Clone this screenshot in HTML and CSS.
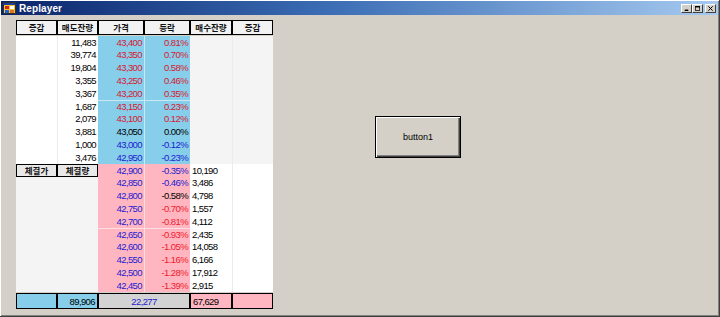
FILE: index.html
```html
<!DOCTYPE html>
<html lang="ko">
<head>
<meta charset="utf-8">
<title>Replayer</title>
<link rel="stylesheet" href="styles.css">
</head>
<body>
<div class="window">
  <div class="titlebar">
    <svg class="appicon" width="13" height="12" viewBox="0 0 13 12">
      <rect x="0.5" y="0.5" width="12" height="11" fill="#f4c430" stroke="#303030"/>
      <rect x="1" y="1" width="11" height="2" fill="#1c3f9c"/>
      <rect x="2" y="4" width="4" height="3" fill="#e02020"/>
      <rect x="7" y="4" width="4" height="3" fill="#ffffff"/>
      <rect x="2" y="8" width="4" height="3" fill="#2060e0"/>
      <rect x="7" y="8" width="4" height="3" fill="#e07020"/>
    </svg>
    <span class="title">Replayer</span>
    <div class="caption-btns">
      <span class="cbtn"><svg width="9" height="7" viewBox="0 0 9 7"><rect x="2" y="5" width="5" height="2" fill="#000"/></svg></span>
      <span class="cbtn"><svg width="9" height="7" viewBox="0 0 9 7"><rect x="1.5" y="0.5" width="6" height="6" fill="none" stroke="#000"/><rect x="1" y="0" width="7" height="2" fill="#000"/></svg></span>
      <span class="cbtn close"><svg width="9" height="7" viewBox="0 0 9 7"><path d="M1.5 0.5 L7.5 6.5 M7.5 0.5 L1.5 6.5" stroke="#000" stroke-width="1.4"/></svg></span>
    </div>
  </div>
  <div class="client">
    <div class="book">
      <div class="row hdr">
        <div class="hcell">증감</div>
        <div class="hcell">매도잔량</div>
        <div class="hcell">가격</div>
        <div class="hcell">등락</div>
        <div class="hcell">매수잔량</div>
        <div class="hcell">증감</div>
      </div>

      <div class="group ask">
        <div class="row"><div class="c c1"></div><div class="c c2 r">11,483</div><div class="c c3 r up">43,400</div><div class="c c4 r up">0.81%</div><div class="c c5"></div><div class="c c6"></div></div>
        <div class="row"><div class="c c1"></div><div class="c c2 r">39,774</div><div class="c c3 r up">43,350</div><div class="c c4 r up">0.70%</div><div class="c c5"></div><div class="c c6"></div></div>
        <div class="row"><div class="c c1"></div><div class="c c2 r">19,804</div><div class="c c3 r up">43,300</div><div class="c c4 r up">0.58%</div><div class="c c5"></div><div class="c c6"></div></div>
        <div class="row"><div class="c c1"></div><div class="c c2 r">3,355</div><div class="c c3 r up">43,250</div><div class="c c4 r up">0.46%</div><div class="c c5"></div><div class="c c6"></div></div>
        <div class="row"><div class="c c1"></div><div class="c c2 r">3,367</div><div class="c c3 r up">43,200</div><div class="c c4 r up">0.35%</div><div class="c c5"></div><div class="c c6"></div></div>
      </div>
      <div class="group ask sep">
        <div class="row"><div class="c c1"></div><div class="c c2 r">1,687</div><div class="c c3 r up">43,150</div><div class="c c4 r up">0.23%</div><div class="c c5"></div><div class="c c6"></div></div>
        <div class="row"><div class="c c1"></div><div class="c c2 r">2,079</div><div class="c c3 r up">43,100</div><div class="c c4 r up">0.12%</div><div class="c c5"></div><div class="c c6"></div></div>
        <div class="row"><div class="c c1"></div><div class="c c2 r">3,881</div><div class="c c3 r eq">43,050</div><div class="c c4 r eq">0.00%</div><div class="c c5"></div><div class="c c6"></div></div>
        <div class="row"><div class="c c1"></div><div class="c c2 r">1,000</div><div class="c c3 r dn">43,000</div><div class="c c4 r dn">-0.12%</div><div class="c c5"></div><div class="c c6"></div></div>
        <div class="row"><div class="c c1"></div><div class="c c2 r">3,476</div><div class="c c3 r dn">42,950</div><div class="c c4 r dn">-0.23%</div><div class="c c5"></div><div class="c c6"></div></div>
      </div>

      <div class="group bid">
        <div class="row"><div class="c c1"><span class="tbtn">체결가</span></div><div class="c c2"><span class="tbtn">체결량</span></div><div class="c c3 r dn">42,900</div><div class="c c4 r dn">-0.35%</div><div class="c c5 l">10,190</div><div class="c c6"></div></div>
        <div class="row"><div class="c c1"></div><div class="c c2"></div><div class="c c3 r dn">42,850</div><div class="c c4 r dn">-0.46%</div><div class="c c5 l">3,486</div><div class="c c6"></div></div>
        <div class="row"><div class="c c1"></div><div class="c c2"></div><div class="c c3 r dn">42,800</div><div class="c c4 r eq">-0.58%</div><div class="c c5 l">4,798</div><div class="c c6"></div></div>
        <div class="row"><div class="c c1"></div><div class="c c2"></div><div class="c c3 r dn">42,750</div><div class="c c4 r up2">-0.70%</div><div class="c c5 l">1,557</div><div class="c c6"></div></div>
        <div class="row"><div class="c c1"></div><div class="c c2"></div><div class="c c3 r dn">42,700</div><div class="c c4 r up2">-0.81%</div><div class="c c5 l">4,112</div><div class="c c6"></div></div>
      </div>
      <div class="group bid sep">
        <div class="row"><div class="c c1"></div><div class="c c2"></div><div class="c c3 r dn">42,650</div><div class="c c4 r up2">-0.93%</div><div class="c c5 l">2,435</div><div class="c c6"></div></div>
        <div class="row"><div class="c c1"></div><div class="c c2"></div><div class="c c3 r dn">42,600</div><div class="c c4 r up2">-1.05%</div><div class="c c5 l">14,058</div><div class="c c6"></div></div>
        <div class="row"><div class="c c1"></div><div class="c c2"></div><div class="c c3 r dn">42,550</div><div class="c c4 r up2">-1.16%</div><div class="c c5 l">6,166</div><div class="c c6"></div></div>
        <div class="row"><div class="c c1"></div><div class="c c2"></div><div class="c c3 r dn">42,500</div><div class="c c4 r up2">-1.28%</div><div class="c c5 l">17,912</div><div class="c c6"></div></div>
        <div class="row"><div class="c c1"></div><div class="c c2"></div><div class="c c3 r dn">42,450</div><div class="c c4 r up2">-1.39%</div><div class="c c5 l">2,915</div><div class="c c6"></div></div>
      </div>

      <div class="row foot">
        <div class="fcell f-blue"></div>
        <div class="fcell f-blue r">89,906</div>
        <div class="fcell f-gray ctr dn">22,277</div>
        <div class="fcell f-pink l">67,629</div>
        <div class="fcell f-pink"></div>
      </div>
    </div>

    <div class="btn1">button1</div>
  </div>
</div>
</body>
</html>
```
FILE: styles.css
```css
* { box-sizing: border-box; margin: 0; padding: 0; }

html, body {
  width: 720px;
  height: 317px;
  overflow: hidden;
  background: #d4d0c8;
}

.window {
  width: 720px;
  height: 317px;
  display: flex;
  flex-direction: column;
  background: #d4d0c8;
  padding: 1px 1px 0 1px;
  border-right: 1px solid #404040;
  border-bottom: 1px solid #404040;
  box-shadow: inset 1px 1px #ffffff, inset -1px -1px #808080;
}

/* title bar */
.titlebar {
  height: 14px;
  display: flex;
  align-items: center;
  padding: 0 2px 0 2px;
  background: linear-gradient(to right, #0a246a 0%, #3a6cb4 45%, #a6caf0 100%);
}

.appicon { display: block; margin-right: 3px; }

.title {
  color: #ffffff;
  font-family: "Liberation Sans", Arial, sans-serif;
  font-weight: bold;
  font-size: 10px;
  letter-spacing: 0.1px;
}

.caption-btns {
  margin-left: auto;
  display: flex;
  align-items: center;
}

.cbtn {
  width: 11px;
  height: 9px;
  display: flex;
  align-items: center;
  justify-content: center;
  background: #d4d0c8;
  border: 1px solid;
  border-color: #ffffff #404040 #404040 #ffffff;
}

.cbtn svg { display: block; width: 7px; height: 5px; }
.cbtn.close { margin-left: 2px; }

/* client area */
.client {
  flex: 1;
  display: flex;
  align-items: flex-start;
  padding: 5px 0 0 15px;
}

.book {
  width: 257px;
  display: flex;
  flex-direction: column;
}

.row {
  display: grid;
  grid-template-columns: 41px 41px 46px 46px 42px 41px;
}

.hdr {
  height: 15px;
  margin-bottom: 1px;
}

.hcell {
  border: 1px solid #000000;
  background: #f2f2f2;
  display: flex;
  align-items: center;
  justify-content: center;
  font-family: "Noto Sans CJK KR", sans-serif;
  font-weight: bold;
  font-size: 8.5px;
  color: #111;
  line-height: 1;
}

.group {
  height: 64px;
  display: grid;
  grid-template-rows: repeat(5, 1fr);
}

.c {
  display: flex;
  align-items: center;
  overflow: hidden;
  white-space: nowrap;
  font-family: "Liberation Sans", Arial, sans-serif;
  font-size: 9.5px;
  letter-spacing: -0.6px;
  line-height: 1;
  color: #000;
}

.r { justify-content: flex-end; padding-right: 2px; }
.l { justify-content: flex-start; padding-left: 2px; }
.ctr { justify-content: center; }

.c2 { border-left: 1px solid #ececec; }
.c4 { border-left: 1px solid rgba(255, 255, 255, 0.55); }
.c6 { border-left: 1px solid #ececec; }

.ask .c1, .ask .c2 { background: #ffffff; }
.ask .c3, .ask .c4 { background: #87ceeb; }
.ask .c5, .ask .c6 { background: #f4f4f4; }

.bid .c1, .bid .c2 { background: #f4f4f4; }
.bid .c3, .bid .c4 { background: #ffb6c1; }
.bid .c5, .bid .c6 { background: #ffffff; }

.sep .row:first-child .c3,
.sep .row:first-child .c4 { border-top: 1px solid rgba(255, 255, 255, 0.55); }

.up { color: #d81830; }
.up2 { color: #f0202c; }
.dn { color: #1c1cd0; }
.eq { color: #000000; }

.bid .c1, .bid .c2 { border-left: none; }

.tbtn {
  width: 100%;
  height: 100%;
  display: flex;
  align-items: center;
  justify-content: center;
  border: 1px solid #000;
  background: #e8e8e8;
  font-family: "Noto Sans CJK KR", sans-serif;
  font-weight: bold;
  font-size: 8.5px;
  letter-spacing: 0;
  color: #111;
}

/* footer */
.foot {
  height: 16px;
  margin-top: 1px;
  grid-template-columns: 41px 41px 92px 42px 41px;
}

.fcell {
  display: flex;
  align-items: center;
  border: 1px solid #000;
  font-family: "Liberation Sans", Arial, sans-serif;
  font-size: 9.5px;
  letter-spacing: -0.6px;
  color: #000;
}

.f-blue { background: #87ceeb; }
.f-gray { background: #d3d3d3; }
.f-pink { background: #ffb6c1; }
.fcell.dn { color: #1c1cd0; }

/* button */
.btn1 {
  margin: 96px 0 0 102px;
  width: 86px;
  height: 42px;
  display: flex;
  align-items: center;
  justify-content: center;
  border: 1px solid #000;
  background: #d4d0c8;
  box-shadow: inset 1px 1px #ffffff, inset -1px -1px #404040, inset -2px -2px #808080;
  font-family: "Liberation Sans", Arial, sans-serif;
  font-size: 9px;
  color: #000;
}
```
